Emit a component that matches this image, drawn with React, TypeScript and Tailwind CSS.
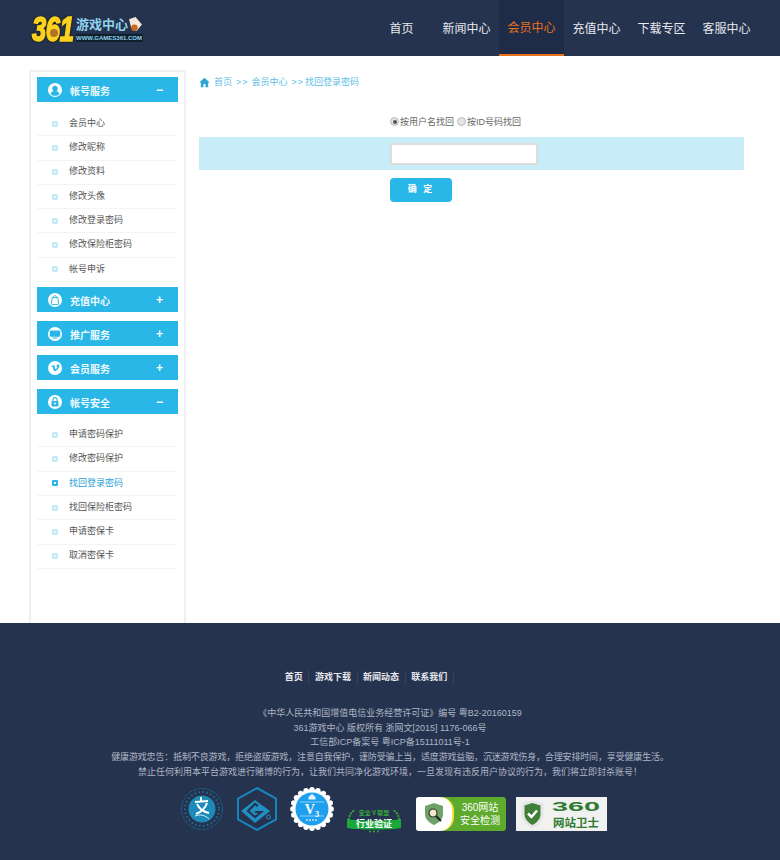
import type { ReactNode } from "react";

const FONT = "font-['Liberation_Sans','Noto_Sans_CJK_SC',sans-serif]";

const NAV = ["首页", "新闻中心", "会员中心", "充值中心", "下载专区", "客服中心"];

// scallops round the edge of the V3 seal
const SCALLOPS = Array.from({ length: 20 }, (_, i) => {
  const a = (i / 20) * Math.PI * 2;
  return { x: 22 + Math.cos(a) * 19.2, y: 22 + Math.sin(a) * 19.2 };
});

const ICONS: Record<string, ReactNode> = {
  user: (
    <>
      <circle cx="7" cy="5.4" r="2.7" fill="#29b7e8" />
      <path d="M2.6 11.2c.7-2.6 2.4-3.4 4.4-3.4s3.700.8 4.400 3.400c-1.200 1-2.700 1.600-4.400 1.600s-3.200-.6-4.400-1.600z" fill="#29b7e8" />
    </>
  ),
  bag: <path d="M4.200 4.600h5.600l.8 6a.8.8 0 0 1-.8 1H4.200a.8.8 0 0 1-.8-1zM5.300 4.600c0-2.500 3.400-2.500 3.400 0" fill="#fff" stroke="#29b7e8" strokeWidth="1" />,
  screen: (
    <>
      <rect x="1.800" y="3.500" width="10.400" height="6.200" rx=".8" fill="#29b7e8" />
      <rect x="4.500" y="10.500" width="5" height="1" fill="#29b7e8" />
    </>
  ),
  vimeo: <path d="M3.200 5.400c1.300-1 2-1.500 2.500-1.500.9 0 1 1 1.200 2.400.2 1.200.4 2 .7 2 .4 0 1.500-1.600 1.500-2.400 0-.6-.5-.8-1.100-.5.500-1.500 1.600-2.100 2.500-2 .9.100 1.100 1 .9 1.900-.4 1.700-2.800 5-4.400 5-1.200 0-1.600-1.800-2-3.300-.2-.8-.4-1.600-.7-1.600-.2 0-.6.3-.9.500z" fill="#29b7e8" />,
  lock: (
    <>
      <rect x="3.500" y="6" width="7" height="5.600" rx=".8" fill="#29b7e8" />
      <path d="M5 6V4.600c0-2.600 4-2.600 4 0V6" fill="none" stroke="#29b7e8" strokeWidth="1.100" />
      <circle cx="7" cy="8.600" r="1" fill="#fff" />
    </>
  ),
};

function MenuHead({ icon, title, open }: { icon: string; title: string; open?: boolean }) {
  return (
    <div className="flex h-[25px] items-center bg-[#29b7e8] pl-[11px] pr-[15px] text-white">
      <svg width="14" height="14" viewBox="0 0 14 14" className="shrink-0">
        <circle cx="7" cy="7" r="7" fill="#fff" />
        {ICONS[icon]}
      </svg>
      <span className="ml-[8px] flex-1 pt-[3px] text-[10px] font-bold text-[#eefaff]">{title}</span>
      <span className="text-[12px] font-bold leading-none">{open ? "−" : "+"}</span>
    </div>
  );
}

function MenuRows({ items, active, top }: { items: string[]; active?: string; top: "first" | "second" }) {
  return (
    <ul className={top === "first" ? "mb-[5px] mt-[10px]" : "mb-[8px] mt-[9px]"}>
      {items.map((item) => (
        <li key={item} className="flex h-[24.300px] items-center border-b border-[#f2f4f5] pl-[15px]">
          {item === active ? (
            <span className="flex h-[6px] w-[6px] items-center justify-center rounded-[1px] bg-[#29b7e8]">
              <span className="h-[2px] w-[2px] bg-white" />
            </span>
          ) : (
            <span className="flex h-[6px] w-[6px] items-center justify-center rounded-[1px] bg-[#c6e9f6]">
              <span className="h-[2px] w-[2px] bg-[#e3f4fa]" />
            </span>
          )}
          <span className={`ml-[11px] text-[9px] ${item === active ? "text-[#2a9fd6]" : "text-[#555]"}`}>{item}</span>
        </li>
      ))}
    </ul>
  );
}

function Sidebar() {
  return (
    <aside className="ml-[29px] mt-[14px] flex w-[157px] flex-col border-x-2 border-t-2 border-[#eef1f3] px-[6px] pt-[5px]">
      <MenuHead icon="user" title="帐号服务" open />
      <MenuRows top="first" items={["会员中心", "修改昵称", "修改资料", "修改头像", "修改登录密码", "修改保险柜密码", "帐号申诉"]} />
      <div className="flex flex-col gap-[9px]">
        <MenuHead icon="bag" title="充值中心" />
        <MenuHead icon="screen" title="推广服务" />
        <MenuHead icon="vimeo" title="会员服务" />
        <MenuHead icon="lock" title="帐号安全" open />
      </div>
      <MenuRows
        top="second"
        items={["申请密码保护", "修改密码保护", "找回登录密码", "找回保险柜密码", "申请密保卡", "取消密保卡"]}
        active="找回登录密码"
      />
    </aside>
  );
}

function Logo() {
  return (
    <div className="ml-[32px] mt-[1px] flex h-[30px] items-start">
      <div className="relative w-[44px]">
        <span className="block origin-left scale-x-[0.8] scale-y-[1.12] font-['Liberation_Sans'] text-[32px] font-bold italic leading-[30px] tracking-[-0.5px] text-[#fbd31e] [-webkit-text-stroke:1.5px_#fbd31e] [filter:drop-shadow(0_0_1px_#1a1400)]">
          361
        </span>
        <span className="absolute left-[18px] top-[15px] h-[8px] w-[8px] rounded-full bg-[#b5702a]" />
      </div>
      <div className="flex flex-col pt-[3px]">
        <div className="flex items-center">
          <span className="text-[13px] font-bold leading-[16px] text-[#8fd4ee]">游戏中心</span>
          <svg width="15" height="15" viewBox="0 0 14 14" className="-mt-[1px]">
            <path d="M1 2l6-2 6 7-5 6-5-3z" fill="#f4e9dc" />
            <circle cx="6" cy="10" r="3" fill="#c8691e" />
          </svg>
        </div>
        <span className="mt-[1px] bg-[#10202b] text-[6px] font-bold leading-[8px] text-[#8fd4ee]">WWW.GAMES361.COM</span>
      </div>
    </div>
  );
}

function Header() {
  return (
    <header className="flex h-[56px] items-center bg-[#26334f]">
      <Logo />
      <nav className="ml-auto mr-[21px] flex h-full">
        {NAV.map((n) =>
          n === "会员中心" ? (
            <a key={n} className="flex w-[65px] items-center justify-center border-b-2 border-[#e8711c] bg-[#1f2c47] pt-[2px] text-[12px] text-[#e8711c]">
              {n}
            </a>
          ) : (
            <a key={n} className="flex w-[65px] items-center justify-center pt-[2px] text-[12px] text-[#e6e9ee]">
              {n}
            </a>
          ),
        )}
      </nav>
    </header>
  );
}

function Radio({ checked, label }: { checked?: boolean; label: string }) {
  return (
    <span className="flex items-center">
      <span className="-mt-[3px] flex h-[9px] w-[9px] items-center justify-center rounded-full border border-[#bbb] bg-[#e4e4e4]">
        {checked && <span className="h-[4px] w-[4px] rounded-full bg-[#555]" />}
      </span>
      <span className="ml-[1px] text-[9px] text-[#666]">{label}</span>
    </span>
  );
}

function Content() {
  return (
    <section className="ml-[13px] w-[545px]">
      <div className="mt-[21px] flex h-[11px] items-center text-[9px] text-[#5cc0e6]">
        <svg width="11" height="11" viewBox="0 0 11 11">
          <path d="M5.500.8L.3 5.500h1.500v4.700h2.700V7h2v3.200h2.700V5.500h1.500z" fill="#2fa6d6" />
        </svg>
        <span className="ml-[4px]">首页</span>
        <span className="ml-[4px] mr-[3px] tracking-[1px]">&gt;&gt;</span>
        <span>会员中心</span>
        <span className="ml-[4px] mr-[1px] tracking-[1px]">&gt;&gt;</span>
        <span>找回登录密码</span>
      </div>
      <div className="mt-[28px] flex h-[14px] gap-[3px] pl-[191px]">
        <Radio checked label="按用户名找回" />
        <Radio label="按ID号码找回" />
      </div>
      <div className="mt-[7px] flex h-[33px] items-center bg-[#c8edf9] pl-[191px]">
        <input className="h-[22px] w-[148px] border-2 border-[#dddddd] bg-white outline-none" />
      </div>
      <button className="ml-[191px] mt-[8px] h-[24px] w-[62px] rounded-[4px] bg-[#29b7e8] text-[9px] font-bold tracking-[2px] text-white">确 定</button>
    </section>
  );
}

function Badges() {
  return (
    <div className="mt-[7px] flex items-start">
      <svg width="44" height="44" viewBox="0 0 44 44" className="ml-[180px]">
        <circle cx="22" cy="22" r="20.500" fill="none" stroke="#17608a" strokeWidth="1" strokeDasharray="4 .8" />
        <circle cx="22" cy="22" r="17" fill="none" stroke="#1d6d96" strokeWidth="2" strokeDasharray="1.500 2.500" />
        <circle cx="22" cy="22" r="13.500" fill="#1d8bb8" />
        <path d="M15 15l13-1M21 10v5M17 17c3 6 7 8 12 9M27 16c-2 6-6 9-11 11" fill="none" stroke="#fff" strokeWidth="2" />
        <path d="M15 29c5-2 10-1 14 3" fill="none" stroke="#d8eef7" strokeWidth="1" />
      </svg>
      <svg width="44" height="44" viewBox="0 0 44 44" className="ml-[11px]">
        <path d="M22 1l19 10.500v21L22 43 3 32.500v-21z" fill="none" stroke="#1685bd" strokeWidth="2" />
        <path d="M20 13l15 11-15 12L6 24z" fill="#1f8fc4" />
        <path d="M23 19l-3-2-7 7 7 6 6-5h-6" fill="none" stroke="#26334f" strokeWidth="2.200" />
        <circle cx="33.500" cy="30" r="2" fill="none" stroke="#1f8fc4" strokeWidth="1" />
      </svg>
      <svg width="44" height="44" viewBox="0 0 44 44" className="ml-[11px]">
        {SCALLOPS.map((s, i) => (
          <circle key={i} cx={s.x} cy={s.y} r="2.700" fill="#fff" />
        ))}
        <circle cx="22" cy="22" r="19.500" fill="#fff" />
        <circle cx="22" cy="22" r="16.500" fill="#1ea0ee" />
        <path d="M22 7l3.500 3v2.500h-7V10z" fill="#e6f5fe" />
        <path d="M10 15h24M10 29h24" stroke="#bfe3fb" strokeWidth=".7" />
        <text x="22" y="27" textAnchor="middle" fontSize="14" fontWeight="700" fill="#fff" fontFamily="Liberation Serif">V₃</text>
        <path d="M16 33h12" stroke="#bfe3fb" strokeWidth="1.500" strokeDasharray="2 1" />
      </svg>
      <svg width="56" height="25" viewBox="0 0 56 25" className="ml-[12px] mt-[21px]">
        <path d="M3 15C2 9 5 4 9 2M53 15c1-6-2-11-6-13" fill="none" stroke="#3aa53f" strokeWidth="2" strokeDasharray="2 1" />
        <text x="28" y="7" textAnchor="middle" fontSize="6" fontWeight="700" fill="#35a83a" fontFamily="Noto Sans CJK SC">安全 V 联盟</text>
        <path d="M1 11c9 2 45 2 54 0v9c-9 2-45 2-54 0z" fill="#19a83a" />
        <text x="28" y="19" textAnchor="middle" fontSize="9" fontWeight="700" fill="#fff" fontFamily="Noto Sans CJK SC">行业验证</text>
        <circle cx="24" cy="23.500" r="1" fill="#35a83a" />
        <circle cx="28" cy="23.500" r="1" fill="#35a83a" />
        <circle cx="32" cy="23.500" r="1" fill="#35a83a" />
      </svg>
      <div className="ml-[14px] mt-[10px] flex h-[34px] w-[90px] items-center overflow-hidden rounded-[3px] bg-[#5daa2c]">
        <div className="flex h-full w-[38px] items-center justify-center rounded-r-[14px] border-r-2 border-[#f6e53c] bg-white">
          <svg width="22" height="24" viewBox="0 0 22 24">
            <path d="M11 1l9 3v8c0 6-5 9-9 11-4-2-9-5-9-11V4z" fill="#6fa26a" />
            <circle cx="10" cy="11" r="4" fill="#f4e7c5" stroke="#333" strokeWidth="1.200" />
            <path d="M13 14l5 5" stroke="#222" strokeWidth="2" />
          </svg>
        </div>
        <div className="flex-1 text-center text-[10px] leading-[13px] text-white">
          360网站
          <br />
          安全检测
        </div>
      </div>
      <div className="ml-[10px] mt-[10px] flex h-[34px] w-[91px] items-center bg-[#f1f1f1] pl-[4px]">
        <svg width="25" height="30" viewBox="0 0 25 30">
          <path d="M12.500 1l11 3.500v11c0 7-7 12-11 14C8.500 27.500 1.500 22.500 1.500 15.500v-11z" fill="#e6e6e6" />
          <path d="M12.500 4l8 2.500v9c0 5-5 9-8 10.500-3-1.500-8-5.500-8-10.500v-9z" fill="#3f7f3a" />
          <path d="M8 14.500l3.500 3.500 5.500-6.500" fill="none" stroke="#fff" strokeWidth="2.500" />
        </svg>
        <svg width="54" height="34" viewBox="0 0 54 34" className="ml-[4px]">
          <text x="3" y="14" textLength="48" lengthAdjust="spacingAndGlyphs" fontSize="13" fontWeight="700" fill="#2f7a2f" fontFamily="Liberation Sans">360</text>
          <text x="27" y="30" textAnchor="middle" fontSize="11.500" fontWeight="700" fill="#2f7a2f" fontFamily="Noto Sans CJK SC">网站卫士</text>
        </svg>
      </div>
    </div>
  );
}

function Footer() {
  const links = ["首页", "游戏下载", "新闻动态", "联系我们"];
  return (
    <footer className="h-[237px] bg-[#26334f] pt-[47px] text-center">
      <div className="flex h-[15px] items-center justify-center pr-[47px]">
        {links.map((l) => (
          <span key={l} className="flex h-[15px] items-center border-r border-[#34415c] px-[5.600px] text-[9px] font-bold text-[#e6e9ee]">
            {l}
          </span>
        ))}
      </div>
      <div className="mt-[21px] text-[9px] leading-[14.700px] text-[#aeb6c4]">
        <p>《中华人民共和国增值电信业务经营许可证》编号 粤B2-20160159</p>
        <p>361游戏中心 版权所有 浙网文[2015] 1176-066号</p>
        <p>工信部ICP备案号 粤ICP备15111011号-1</p>
        <p className="tracking-[-0.15px]">健康游戏忠告：抵制不良游戏，拒绝盗版游戏，注意自我保护，谨防受骗上当，适度游戏益脑，沉迷游戏伤身，合理安排时间，享受健康生活。</p>
        <p>禁止任何利用本平台游戏进行赌博的行为，让我们共同净化游戏环境，一旦发现有违反用户协议的行为，我们将立即封杀账号！</p>
      </div>
      <Badges />
    </footer>
  );
}

export default function App() {
  return (
    <div className={`${FONT} w-[780px] bg-white`}>
      <Header />
      <main className="flex h-[567px] bg-white">
        <Sidebar />
        <Content />
      </main>
      <Footer />
    </div>
  );
}
